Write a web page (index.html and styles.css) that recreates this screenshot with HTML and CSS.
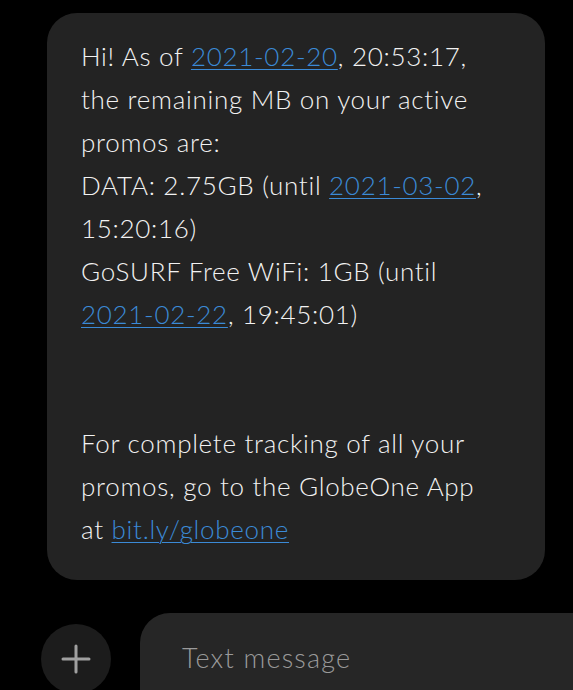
FILE: index.html
```html
<!doctype html>
<html>
  <head>
    <meta charset="utf-8" />
    <meta name="viewport" content="width=device-width, initial-scale=1" />
    <link rel="stylesheet" href="styles.css">
  </head>

  <body>
    <section class="thread">
      <div class="bubble">
        <p class="message">
          Hi! As of <a href="#">2021-02-20</a>, 20:53:17,<br>
          the remaining MB on your active<br>
          promos are:<br>
          DATA: 2.75GB (until <a href="#">2021-03-02</a>,<br>
          15:20:16)<br>
          GoSURF Free WiFi: 1GB (until<br>
          <a href="#">2021-02-22</a>, 19:45:01)<br>
          <br>
          <br>
          For complete tracking of all your<br>
          promos, go to the GlobeOne App<br>
          at <a href="#">bit.ly/globeone</a>
        </p>
      </div>
    </section>

    <div class="composer">
      <button class="attach" type="button" aria-label="Attach">
        <svg width="30" height="30" viewBox="0 0 30 30">
          <path d="M15 2v26M2 15h26" stroke="#a0a0a0" stroke-width="3" stroke-linecap="round" />
        </svg>
      </button>
      <div class="input">Text message</div>
    </div>
  </body>
</html>
```

FILE: styles.css
```css
body {
  background: #000;
  font-family: Lato, "Noto Sans", sans-serif;
  font-weight: 300;
  margin: 0;
  overflow: hidden;
}

.thread {
  padding: 13px 28px 0 47px;
}

.bubble {
  background: #232323;
  border-radius: 30px;
  box-sizing: border-box;
  height: 567px;
  padding: 22px 20px 0 34px;
  width: 498px;
}

.message {
  color: #f2f2f2;
  font-size: 26px;
  letter-spacing: 0.7px;
  line-height: 43px;
  margin: 0;
  white-space: nowrap;
}

.message a {
  color: #3b8ad6;
  text-decoration: underline;
  text-decoration-thickness: 1px;
  text-underline-offset: 3px;
}

.composer {
  align-items: flex-start;
  display: flex;
  gap: 29px;
  margin-top: 33px;
  padding-left: 41px;
}

.attach {
  align-items: center;
  background: #1c1c1c;
  border: 0;
  border-radius: 50%;
  display: flex;
  height: 70px;
  justify-content: center;
  margin-top: 11px;
  padding: 0;
  width: 70px;
}

.input {
  background: #262626;
  border-radius: 30px 0 0 0;
  box-sizing: border-box;
  color: #9a9a9a;
  flex: 1;
  font-size: 27px;
  font-weight: 300;
  height: 77px;
  letter-spacing: 1.2px;
  line-height: 44px;
  padding: 23px 0 0 42px;
}
```
